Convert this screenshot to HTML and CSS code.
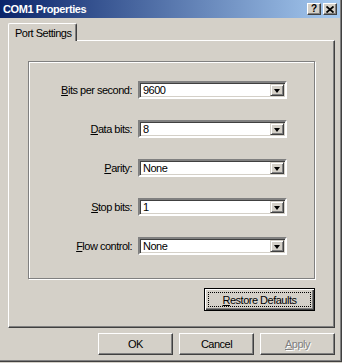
FILE: index.html
```html
<!DOCTYPE html>
<html lang="en">
<head>
    <meta charset="UTF-8">
    <title>COM1 Properties</title>
    <link rel="stylesheet" href="styles.css">
</head>
<body>
    <div class="window">
        <div class="titlebar">
            <span class="title">COM1 Properties</span>
            <div class="caption-buttons">
                <span class="cap-btn">?</span>
                <span class="cap-btn">
                    <svg width="8" height="7" viewBox="0 0 8 7">
                        <path d="M0.5 0.5 L7.5 6.5 M7.5 0.5 L0.5 6.5" stroke="#000" stroke-width="1.8" fill="none"/>
                    </svg>
                </span>
            </div>
        </div>

        <div class="dialog-body">
            <div class="tabs">
                <div class="tab active">Port Settings</div>
            </div>

            <div class="tab-page">
                <div class="group">
                    <div class="field-grid">
                        <label><u>B</u>its per second:</label>
                        <div class="combo"><span class="combo-value">9600</span><span class="combo-btn"><i class="arrow"></i></span></div>

                        <label><u>D</u>ata bits:</label>
                        <div class="combo"><span class="combo-value">8</span><span class="combo-btn"><i class="arrow"></i></span></div>

                        <label><u>P</u>arity:</label>
                        <div class="combo"><span class="combo-value">None</span><span class="combo-btn"><i class="arrow"></i></span></div>

                        <label><u>S</u>top bits:</label>
                        <div class="combo"><span class="combo-value">1</span><span class="combo-btn"><i class="arrow"></i></span></div>

                        <label><u>F</u>low control:</label>
                        <div class="combo"><span class="combo-value">None</span><span class="combo-btn"><i class="arrow"></i></span></div>
                    </div>
                </div>

                <div class="page-actions">
                    <button class="btn btn-restore"><u>R</u>estore Defaults</button>
                </div>
            </div>

            <div class="dialog-buttons">
                <button class="btn">OK</button>
                <button class="btn">Cancel</button>
                <button class="btn" disabled><u>A</u>pply</button>
            </div>
        </div>
    </div>
</body>
</html>
```

FILE: styles.css
```css
body {
    margin: 0;
    background: #d4d0c8;
    font-family: "Liberation Sans", Arial, sans-serif;
    font-size: 11px;
    letter-spacing: -0.5px;
    color: #000;
}

.window {
    width: 342px;
    height: 362px;
    box-sizing: border-box;
    background: #d4d0c8;
    border-right: 1px solid #404040;
    border-bottom: 1px solid #404040;
    box-shadow: inset -1px -1px 0 #808080;
}

.titlebar {
    height: 18px;
    margin-right: 1px;
    display: flex;
    align-items: center;
    justify-content: space-between;
    background: linear-gradient(to right, #0a246a, #a6caf0);
    padding: 0 3px;
}

.title {
    color: #fff;
    font-weight: bold;
    letter-spacing: -0.4px;
}

.caption-buttons {
    display: flex;
    gap: 2px;
}

.cap-btn {
    width: 14px;
    height: 12px;
    box-sizing: border-box;
    display: flex;
    align-items: center;
    justify-content: center;
    background: #d4d0c8;
    border: 1px solid;
    border-color: #fff #404040 #404040 #fff;
    box-shadow: inset -1px -1px 0 #808080;
    font-weight: bold;
    font-size: 10px;
    letter-spacing: 0;
    line-height: 1;
}

.dialog-body {
    padding: 5px 0 0 8px;
}

.tabs {
    display: flex;
    height: 17px;
}

.tab {
    width: 69px;
    box-sizing: border-box;
    height: 18px;
    padding: 3px 0 0 6px;
    background: #d4d0c8;
    border-top: 1px solid #fff;
    border-left: 1px solid #fff;
    border-right: 1px solid #404040;
    border-radius: 2px 2px 0 0;
    box-shadow: inset -1px 0 0 #808080;
    position: relative;
    z-index: 1;
}

.tab-page {
    width: 327px;
    height: 288px;
    box-sizing: border-box;
    border: 1px solid;
    border-color: #fff #404040 #404040 #fff;
    box-shadow: inset -1px -1px 0 #808080;
    padding: 20px 19px 0 19px;
}

.group {
    height: 218px;
    box-sizing: border-box;
    border: 1px solid #808080;
    box-shadow: inset 1px 1px 0 #fff, 1px 1px 0 #fff;
    padding-top: 19px;
}

.field-grid {
    display: grid;
    grid-template-columns: 103px 149px;
    grid-auto-rows: 18px;
    column-gap: 6px;
    row-gap: 21px;
}

.field-grid label {
    text-align: right;
    line-height: 18px;
}

.combo {
    display: flex;
    box-sizing: border-box;
    background: #fff;
    border: 2px solid;
    border-color: #808080 #fff #fff #808080;
    box-shadow: inset 1px 1px 0 #404040, inset -1px -1px 0 #d4d0c8;
    padding: 1px;
}

.combo-value {
    flex: 1;
    padding-left: 2px;
    line-height: 13px;
}

.combo-btn {
    width: 14px;
    box-sizing: border-box;
    display: flex;
    align-items: center;
    justify-content: center;
    background: #d4d0c8;
    border: 1px solid;
    border-color: #d4d0c8 #404040 #404040 #d4d0c8;
    box-shadow: inset 1px 1px 0 #fff, inset -1px -1px 0 #808080;
}

.arrow {
    width: 0;
    height: 0;
    border-left: 3px solid transparent;
    border-right: 3px solid transparent;
    border-top: 4px solid #000;
    margin-top: 1px;
}

.page-actions {
    display: flex;
    justify-content: flex-end;
    margin-top: 9px;
}

.btn {
    width: 75px;
    height: 22px;
    box-sizing: border-box;
    padding: 0;
    background: #d4d0c8;
    font-family: inherit;
    font-size: 11px;
    letter-spacing: -0.5px;
    color: #000;
    border: 1px solid;
    border-color: #fff #404040 #404040 #fff;
    box-shadow: inset -1px -1px 0 #808080;
}

.btn-restore {
    width: 111px;
    height: 23px;
    border: 1px solid #000;
    box-shadow: inset 1px 1px 0 #fff, inset -1px -1px 0 #404040, inset -2px -2px 0 #808080;
    outline: 1px dotted #000;
    outline-offset: -5px;
}

.btn:disabled {
    color: #808080;
    text-shadow: 1px 1px 0 #fff;
}

.dialog-buttons {
    width: 327px;
    display: flex;
    justify-content: flex-end;
    gap: 6px;
    margin-top: 5px;
}
```
